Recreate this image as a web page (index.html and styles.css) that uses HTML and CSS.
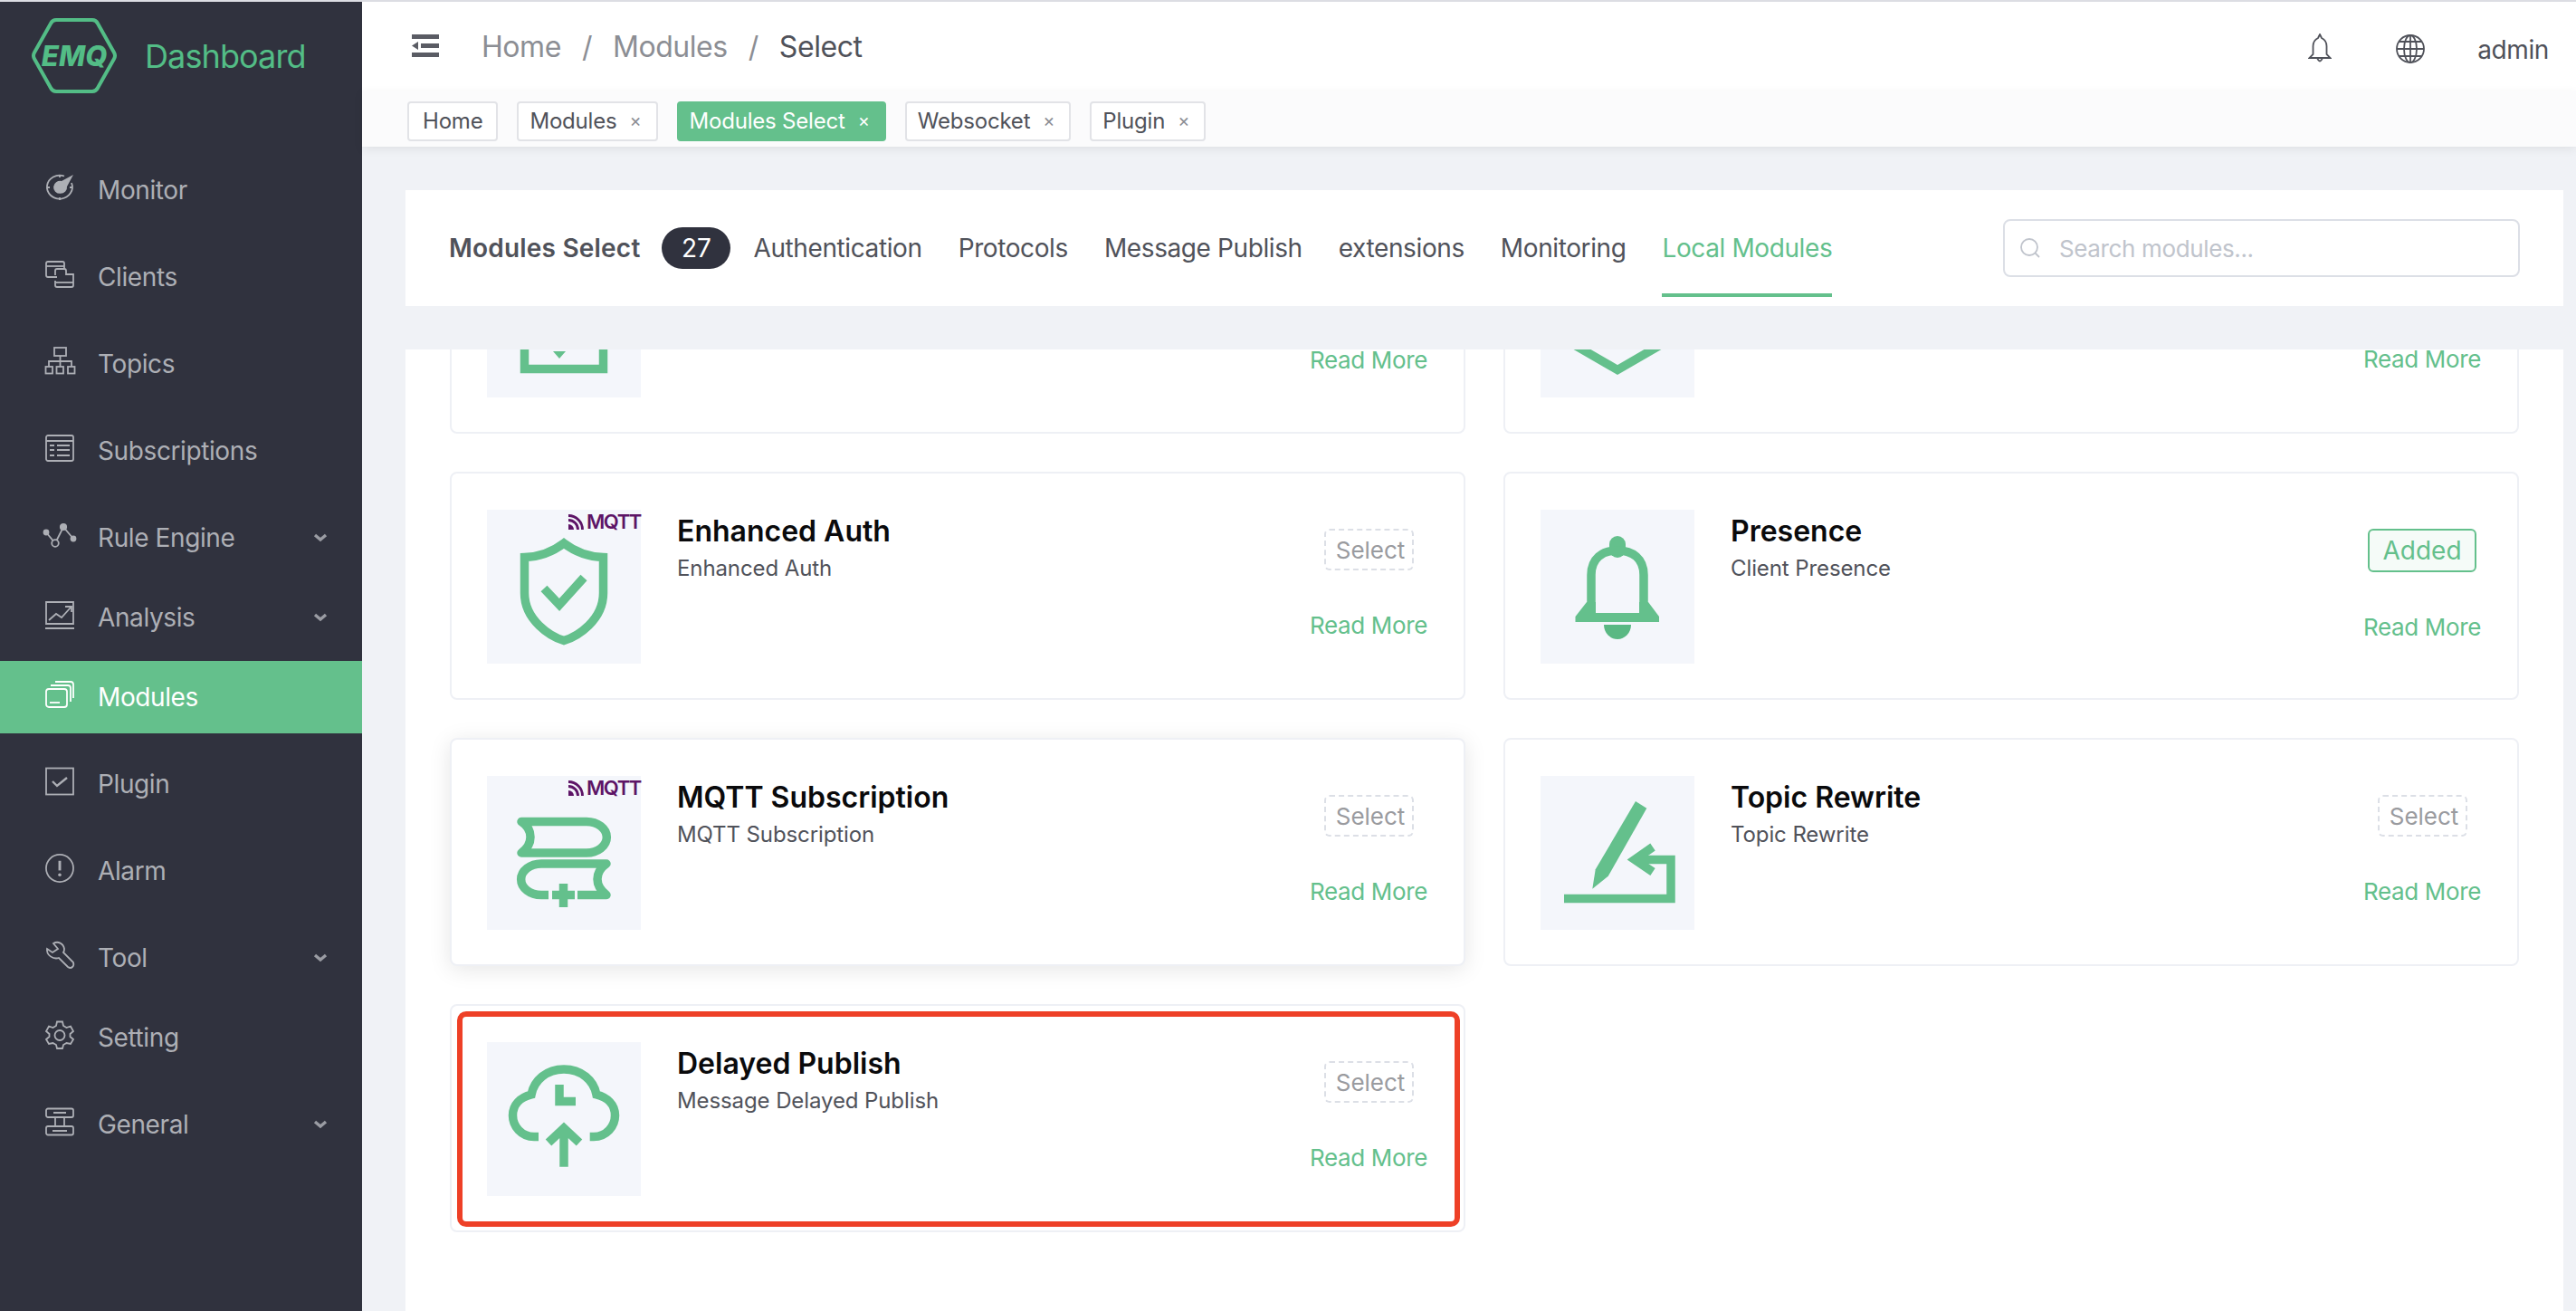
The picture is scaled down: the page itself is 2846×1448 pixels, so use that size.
FILE: index.html
```html
<!DOCTYPE html>
<html lang="en">
<head>
    <meta charset="UTF-8">
    <title>EMQ Dashboard - Modules Select</title>
    <link rel="stylesheet" href="styles.css">
</head>
<body>
    <aside class="sidebar">
        <div class="logo">
            <svg class="logo-hex" viewBox="0 0 94 85" width="94" height="85">
                <path d="M27 3 H67 Q71 3 73 7 L91 39 Q93 42.500 91 46 L73 78 Q71 82 67 82 H27 Q23 82 21 78 L3 46 Q1 42.500 3 39 L21 7 Q23 3 27 3 Z" fill="none" stroke="#53bd86" stroke-width="4"/>
                <text x="47" y="54" class="logo-mark" text-anchor="middle">EMQ</text>
            </svg>
            <span class="logo-title">Dashboard</span>
        </div>
        <nav class="menu">
            <a class="menu-item">
                <svg class="menu-icon" viewBox="0 0 32 32"><path d="M21 3.500 A14 13 0 1 0 29 11"/><path d="M31 2 L18 9 A7.500 7 0 1 0 24 15 Z" fill="currentColor" stroke="none"/><path d="M16 2 V5 M16 27 V30 M2 16 H5 M27 16 H30"/></svg>
                <span>Monitor</span>
            </a>
            <a class="menu-item">
                <svg class="menu-icon" viewBox="0 0 32 32"><path d="M13 19 H3 Q1 19 1 17 V4 Q1 2 3 2 H19 Q21 2 21 4 V10"/><path d="M1 7 H21"/><path d="M11 17 V12 Q11 10 13 10 H21 Q23 10 23 12 V16 H31 V28 Q31 30 29 30 H13 Q11 30 11 28 V23"/><path d="M11 25 H31"/></svg>
                <span>Clients</span>
            </a>
            <a class="menu-item">
                <svg class="menu-icon" viewBox="0 0 32 32"><rect x="10" y="1" width="13" height="9"/><rect x="0.500" y="22" width="7.500" height="7.500"/><rect x="12.500" y="22" width="7.500" height="7.500"/><rect x="25" y="22" width="7.500" height="7.500"/><path d="M16.500 10 V22 M4 22 V16 H29 V22"/></svg>
                <span>Topics</span>
            </a>
            <a class="menu-item">
                <svg class="menu-icon" viewBox="0 0 32 32"><rect x="1" y="2" width="30" height="28" rx="2"/><path d="M1 8 H31 M5 13 H10 M13 13 H27 M5 18 H10 M13 18 H27 M5 24 H10 M13 24 H27"/></svg>
                <span>Subscriptions</span>
            </a>
            <a class="menu-item tight">
                <svg class="menu-icon wide" viewBox="0 0 36 26"><path d="M3 10 L13 22 L22 4 L33 17"/><circle cx="3" cy="10" r="2.500" fill="currentColor"/><circle cx="13" cy="22" r="3.800" fill="#30323e"/><circle cx="22" cy="4" r="3.200" fill="currentColor"/><circle cx="33" cy="17" r="2.500" fill="currentColor"/></svg>
                <span>Rule Engine</span>
                <svg class="menu-arrow" viewBox="0 0 16 10"><path d="M2 2 L8 7 L14 2"/></svg>
            </a>
            <a class="menu-item tight">
                <svg class="menu-icon" viewBox="0 0 32 32"><path d="M1 26 V2 H31 V26 H1 Z M0 31 H32"/><path d="M4 22 L12 15 L18 19 L28 8 M22 7 H29 V13"/></svg>
                <span>Analysis</span>
                <svg class="menu-arrow" viewBox="0 0 16 10"><path d="M2 2 L8 7 L14 2"/></svg>
            </a>
            <a class="menu-item active">
                <svg class="menu-icon" viewBox="0 0 32 32"><rect x="1" y="10" width="23" height="20" rx="3"/><path d="M5 25 H16"/><path d="M6 6 H25 Q28 6 28 9 V24"/><path d="M11 2 H28 Q31 2 31 5 V20"/></svg>
                <span>Modules</span>
            </a>
            <a class="menu-item">
                <svg class="menu-icon" viewBox="0 0 32 32"><rect x="1" y="1.500" width="30" height="29"/><path d="M8 16 L13 21 L24 12" stroke-width="2.400"/></svg>
                <span>Plugin</span>
            </a>
            <a class="menu-item">
                <svg class="menu-icon" viewBox="0 0 33 33"><circle cx="16.500" cy="16.500" r="15.500"/><path d="M16.500 8 V19" stroke-width="3"/><circle cx="16.500" cy="24" r="1.800" fill="currentColor" stroke="none"/></svg>
                <span>Alarm</span>
            </a>
            <a class="menu-item tight">
                <svg class="menu-icon" viewBox="0 0 32 32"><path d="M2 9 L8 13 L14 9 L9 3 C14 0 20 3 21 9 C21 11 21 12 20 13 L31 24 Q32 27 30 29 Q28 31 25 29 L15 19 C9 21 1 16 2 9 Z"/></svg>
                <span>Tool</span>
                <svg class="menu-arrow" viewBox="0 0 16 10"><path d="M2 2 L8 7 L14 2"/></svg>
            </a>
            <a class="menu-item">
                <svg class="menu-icon" viewBox="0 0 32 32"><path d="M13 1.500 H19 L20 6 L23.500 8 L28 6.500 L31 12 L27.500 15 V18 L31 21 L28 26 L23.500 25 L20 27 L19 31 H13 L12 27 L8.500 25 L4 26 L1 21 L4.500 18 V15 L1 12 L4 6.500 L8.500 8 L12 6 Z"/><circle cx="16" cy="16.500" r="5.500"/></svg>
                <span>Setting</span>
            </a>
            <a class="menu-item">
                <svg class="menu-icon" viewBox="0 0 32 32"><rect x="1" y="1.500" width="30" height="9.500" rx="2"/><rect x="1" y="21" width="30" height="9.500" rx="2"/><path d="M11 11 V21 M21 11 V21 M9 6 H23 M8 26 H24"/></svg>
                <span>General</span>
                <svg class="menu-arrow" viewBox="0 0 16 10"><path d="M2 2 L8 7 L14 2"/></svg>
            </a>
        </nav>
    </aside>

    <div class="main">
        <header class="topbar">
            <svg class="fold-icon" viewBox="0 0 30 25"><path d="M0 0 H30 V5 H0 Z M10 10 H30 V15 H10 Z M0 20 H30 V25 H0 Z M0 12.500 L7 8 V17 Z"/></svg>
            <div class="crumbs">
                <span>Home</span><i>/</i><span>Modules</span><i>/</i><span class="current">Select</span>
            </div>
            <svg class="top-icon bell" viewBox="0 0 26 32"><path d="M13 1 L15 5 C19 7 20.500 10 20.500 14 V23 L24.500 27 H1.500 L5.500 23 V14 C5.500 10 7 7 11 5 Z M10 27 Q13 34 16 27"/></svg>
            <svg class="top-icon globe" viewBox="0 0 32 32"><circle cx="16" cy="16" r="15"/><ellipse cx="16" cy="16" rx="7" ry="15"/><path d="M16 1 V31 M1 16 H31 M4 8 H28 M4 24 H28"/></svg>
            <span class="user">admin</span>
        </header>

        <div class="tags">
            <span class="tag home">Home</span>
            <span class="tag">Modules<b>×</b></span>
            <span class="tag active">Modules Select<b>×</b></span>
            <span class="tag">Websocket<b>×</b></span>
            <span class="tag">Plugin<b>×</b></span>
        </div>

        <div class="content">
            <section class="filter">
                <h2>Modules Select</h2>
                <span class="count">27</span>
                <div class="tabs">
                    <a class="tab">Authentication</a>
                    <a class="tab">Protocols</a>
                    <a class="tab">Message Publish</a>
                    <a class="tab">extensions</a>
                    <a class="tab">Monitoring</a>
                    <a class="tab active">Local Modules</a>
                </div>
                <div class="search">
                    <svg viewBox="0 0 24 24"><circle cx="11" cy="11" r="9"/><path d="M17.500 17.500 L22 22"/></svg>
                    <span>Search modules...</span>
                </div>
            </section>

            <div class="scroller">
                <div class="cards">
                    <div class="card">
                        <div class="thumb">
                            <svg viewBox="0 0 170 170"><path class="line" d="M41.500 110 V138.500 H128.500 V110"/><path class="solid" d="M73 119 H87 L80 127 Z"/></svg>
                        </div>
                        <div class="info"></div>
                        <div class="actions scrolled">
                            <a class="more">Read More</a>
                        </div>
                    </div>
                    <div class="card">
                        <div class="thumb">
                            <svg viewBox="0 0 170 170"><path class="line" d="M27 106 L85 139.500 L143 106"/></svg>
                        </div>
                        <div class="info"></div>
                        <div class="actions scrolled up">
                            <a class="more">Read More</a>
                        </div>
                    </div>

                    <div class="card">
                        <div class="thumb">
                            <svg viewBox="0 0 170 170"><path class="line" d="M85 37 C72 47 58 52 41.500 52.500 V92 C41.500 122 70 140 85 144.500 C100 140 128.500 122 128.500 92 V52.500 C112 52 98 47 85 37 Z"/><path class="line" d="M63 87 L80 105 L107 75"/></svg>
                            <span class="mqtt"><svg viewBox="0 0 17 17"><path d="M0 11 A6 6 0 0 1 6 17 H0 Z"/><path class="wave" d="M0 6.500 A10.500 10.500 0 0 1 10.500 17 M0 1.500 A15.500 15.500 0 0 1 15.500 17"/></svg>MQTT</span>
                        </div>
                        <div class="info">
                            <h3>Enhanced Auth</h3>
                            <p>Enhanced Auth</p>
                        </div>
                        <div class="actions">
                            <span class="btn-select">Select</span>
                            <a class="more">Read More</a>
                        </div>
                    </div>
                    <div class="card">
                        <div class="thumb">
                            <svg viewBox="0 0 170 170"><rect class="solid" x="76" y="29" width="18" height="24" rx="9"/><path class="line" d="M56 107 V72 C56 54 68 45 85 45 C102 45 114 54 114 72 V107"/><path class="solid" d="M51 102 H61 V114 H109 V102 H119 L131 118 V124 H38.500 V118 Z"/><path class="clapper" d="M70 127 H100 A15 16 0 0 1 70 127 Z"/></svg>
                        </div>
                        <div class="info">
                            <h3>Presence</h3>
                            <p>Client Presence</p>
                        </div>
                        <div class="actions">
                            <span class="btn-added">Added</span>
                            <a class="more">Read More</a>
                        </div>
                    </div>

                    <div class="card hover">
                        <div class="thumb">
                            <svg viewBox="0 0 170 170"><path class="line round" d="M38 50.500 H110 A22 17 0 0 1 110 85 H38 C45 80 48 74 48 67.500 C48 61 45 55 38 50.500 Z"/><path class="line round" d="M68 131.500 H60 A22 17 0 0 1 60 97 H132 C125 102 122 108 122 114 C122 120 125 126 132 131.500 H100"/><path class="line" d="M72 131.500 H97 M84.500 119 V145"/></svg>
                            <span class="mqtt"><svg viewBox="0 0 17 17"><path d="M0 11 A6 6 0 0 1 6 17 H0 Z"/><path class="wave" d="M0 6.500 A10.500 10.500 0 0 1 10.500 17 M0 1.500 A15.500 15.500 0 0 1 15.500 17"/></svg>MQTT</span>
                        </div>
                        <div class="info">
                            <h3>MQTT Subscription</h3>
                            <p>MQTT Subscription</p>
                        </div>
                        <div class="actions">
                            <span class="btn-select">Select</span>
                            <a class="more">Read More</a>
                        </div>
                    </div>
                    <div class="card">
                        <div class="thumb">
                            <svg viewBox="0 0 170 170"><path class="solid" d="M105 28 L117.300 35.700 L74.700 110.700 L57.300 124.700 L60.700 103.300 Z"/><path class="line" d="M124 78.500 L104 92.500 L124 106"/><path class="line" d="M104 92.500 H144 V135.500 H26"/></svg>
                        </div>
                        <div class="info">
                            <h3>Topic Rewrite</h3>
                            <p>Topic Rewrite</p>
                        </div>
                        <div class="actions">
                            <span class="btn-select">Select</span>
                            <a class="more">Read More</a>
                        </div>
                    </div>

                    <div class="card">
                        <div class="thumb">
                            <svg viewBox="0 0 170 170"><path class="line" d="M57 104.500 H52 C38 104.500 28.500 93 28.500 81 C28.500 69 37 61 49 58 C52 42 66 30 85 30 C104 30 118 42 121 58 C133 61 141.500 69 141.500 81 C141.500 93 132 104.500 118 104.500 H113.700"/><path class="line" d="M80 47 V65.500 H98"/><path class="line" d="M68 111 L85 95 L102 111 M85 95 V137.700"/></svg>
                        </div>
                        <div class="info">
                            <h3>Delayed Publish</h3>
                            <p>Message Delayed Publish</p>
                        </div>
                        <div class="actions">
                            <span class="btn-select">Select</span>
                            <a class="more">Read More</a>
                        </div>
                        <div class="highlight"></div>
                    </div>
                </div>
            </div>
        </div>
    </div>
</body>
</html>
```

FILE: styles.css
```css
* {
    box-sizing: border-box;
}

body {
    display: flex;
    height: 100vh;
    margin: 0;
    overflow: hidden;
    border-top: 2px solid #dcdde3;
    background-color: #f0f2f6;
    font-family: Inter, "Liberation Sans", sans-serif;
    color: #50525a;
}

/* the reference text runs a little tighter than Inter's default */
.menu-item,
.crumbs,
.tab,
.user,
.search,
.more {
    letter-spacing: -0.014em;
}

/* sidebar */
.sidebar {
    flex: 0 0 400px;
    background-color: #30323e;
}

.logo {
    display: flex;
    height: 168px;
    padding: 17px 0 0 35px;
}

.logo-hex {
    flex: none;
}

.logo-mark {
    font-size: 31px;
    font-weight: 800;
    font-style: italic;
    fill: #53bd86;
}

.logo-title {
    margin: 21px 0 0 31px;
    font-size: 36px;
    line-height: 44px;
    letter-spacing: -0.9px;
    color: #53bd86;
}

.menu-item {
    display: flex;
    align-items: center;
    height: 80px;
    margin-bottom: 16px;
    padding: 0 38px 0 50px;
    font-size: 28px;
    color: #adafb5;
}

.menu-item.tight {
    margin-bottom: 8px;
}

.menu-item.active {
    background-color: #64c08c;
    color: #fff;
}

.menu-icon {
    flex: none;
    width: 32px;
    height: 32px;
    margin: 0 26px 7px 0;
    fill: none;
    stroke: currentColor;
    stroke-width: 1.8;
    overflow: visible;
}

.menu-icon.wide {
    width: 36px;
    height: 26px;
    margin: 0 24px 7px -2px;
}

.menu-arrow {
    width: 16px;
    height: 10px;
    margin-left: auto;
    fill: none;
    stroke: #9a9ca3;
    stroke-width: 3.4;
}

/* top bar */
.main {
    display: flex;
    flex: 1;
    flex-direction: column;
    min-width: 0;
}

.topbar {
    display: flex;
    flex: 0 0 98px;
    align-items: center;
    padding: 0 30px 0 55px;
    background-color: #fff;
}

.fold-icon {
    width: 30px;
    height: 25px;
    margin-bottom: 2px;
    fill: #5a5c64;
}

.crumbs {
    display: flex;
    margin: 0 auto 0 47px;
    font-size: 32px;
    color: #8c8e94;
}

.crumbs i {
    margin: 0 23px;
    font-style: normal;
}

.crumbs .current {
    color: #50525a;
}

.top-icon {
    fill: none;
    stroke: #50525a;
    stroke-width: 1.8;
}

.bell {
    width: 26px;
    height: 32px;
    margin-top: 3px;
}

.globe {
    width: 32px;
    height: 32px;
    margin: 6px 58px 0 71px;
}

.user {
    margin-top: 8px;
    font-size: 28px;
}

.tags {
    position: relative;
    display: flex;
    flex: 0 0 62px;
    gap: 21px;
    padding: 12px 0 0 50px;
    background-color: #fbfbfc;
    box-shadow: 0 3px 10px rgba(0, 0, 0, 0.07);
}

.tag {
    display: flex;
    align-items: center;
    height: 44px;
    padding: 0 16px 2px 12px;
    border: 2px solid #e2e3e7;
    border-radius: 4px;
    background-color: #fff;
    font-size: 24px;
    letter-spacing: -0.2px;
}

.tag.home {
    padding: 0 15px 2px;
}

.tag b {
    margin-left: 14px;
    font-size: 20px;
    font-weight: 400;
    color: #8c8e94;
}

.tag.active {
    border-color: #64c08c;
    background-color: #64c08c;
    color: #fff;
}

.tag.active b {
    color: #fff;
}

/* content */
.content {
    display: flex;
    flex: 1;
    flex-direction: column;
    min-height: 0;
    padding: 48px 14px 0 48px;
}

.filter {
    display: flex;
    flex: 0 0 128px;
    align-items: center;
    margin-bottom: 48px;
    padding: 0 48px 0 48px;
    background-color: #fff;
}

.filter h2 {
    margin: 0;
    font-size: 28px;
    font-weight: 600;
    letter-spacing: 0.2px;
}

.count {
    width: 76px;
    height: 46px;
    margin-left: 24px;
    border-radius: 23px;
    background-color: #30323e;
    color: #fff;
    font-size: 28px;
    line-height: 46px;
    text-align: center;
}

.tabs {
    display: flex;
    align-self: stretch;
    gap: 40px;
    margin-left: 25px;
}

.tab {
    display: flex;
    align-items: center;
    margin-bottom: 10px;
    padding-top: 14px;
    border-bottom: 4px solid transparent;
    font-size: 28px;
}

.tab.active {
    border-bottom-color: #64c08c;
    color: #64c08c;
}

.search {
    display: flex;
    align-items: center;
    width: 571px;
    height: 64px;
    margin-left: auto;
    padding-left: 16px;
    border: 2px solid #dcdfe6;
    border-radius: 8px;
    font-size: 26px;
    color: #c0c4cc;
}

.search svg {
    width: 24px;
    height: 24px;
    margin-right: 20px;
    fill: none;
    stroke: #c0c4cc;
    stroke-width: 1.8;
}

.scroller {
    flex: 1;
    min-height: 0;
    overflow: hidden;
    background-color: #fff;
}

.cards {
    display: grid;
    grid-template-columns: 1fr 1fr;
    gap: 42px;
    margin-top: -159px;
    padding: 0 49px;
}

.card {
    position: relative;
    display: flex;
    height: 252px;
    padding: 40px 40px 40px 39px;
    border: 2px solid #eef0f5;
    border-radius: 8px;
    background-color: #fff;
}

.card.hover {
    box-shadow: 0 4px 24px rgba(0, 0, 0, 0.1);
}

.thumb {
    position: relative;
    flex: 0 0 170px;
    height: 170px;
    background-color: #f4f6fb;
}

.thumb > svg {
    display: block;
    width: 170px;
    height: 170px;
}

.line {
    fill: none;
    stroke: #64c08c;
    stroke-width: 9.5;
}

.line.round {
    stroke-linejoin: round;
}

.solid {
    fill: #64c08c;
}

.clapper {
    fill: #5ab883;
}

.mqtt {
    position: absolute;
    top: 0;
    right: 0;
    display: flex;
    align-items: center;
    gap: 3px;
    font-size: 22px;
    font-weight: 600;
    line-height: 26px;
    letter-spacing: -1.4px;
    color: #5d1466;
}

.mqtt svg {
    flex: none;
    width: 17px;
    height: 17px;
    fill: #5d1466;
}

.mqtt .wave {
    fill: none;
    stroke: #5d1466;
    stroke-width: 2.8;
}

.info {
    flex: 1;
    margin-left: 40px;
}

.info h3 {
    margin: 4px 0 0;
    font-size: 32px;
    font-weight: 600;
    line-height: 40px;
    color: #0a0a0c;
}

.info p {
    margin: 6px 0 0;
    font-size: 24px;
    line-height: 30px;
    letter-spacing: -0.1px;
}

.actions {
    display: flex;
    flex-direction: column;
    align-items: center;
    padding-top: 21px;
}

/* first row: only the bottom of the card is still on screen */
.actions.scrolled {
    padding-top: 119px;
}

.actions.scrolled.up {
    padding-top: 118px;
}

.actions.scrolled .more {
    margin-top: 0;
}

.btn-select,
.btn-added {
    display: flex;
    align-items: center;
    justify-content: center;
    border-radius: 6px;
}

.btn-select {
    width: 99px;
    height: 46px;
    padding-left: 4px;
    border: 2px dashed #dcdfe6;
    font-size: 26px;
    color: #9a9b9f;
}

.btn-added {
    width: 120px;
    height: 48px;
    border: 2px solid #64c08c;
    background-color: #f5fbf8;
    font-size: 28px;
    color: #64c08c;
}

.more {
    margin-top: 51px;
    font-size: 26px;
    line-height: 20px;
    color: #64c08c;
}

/* red annotation box */
.highlight {
    position: absolute;
    inset: 6px 4px 4px 6px;
    border: 6px solid #ee4027;
    border-radius: 10px;
}
```
